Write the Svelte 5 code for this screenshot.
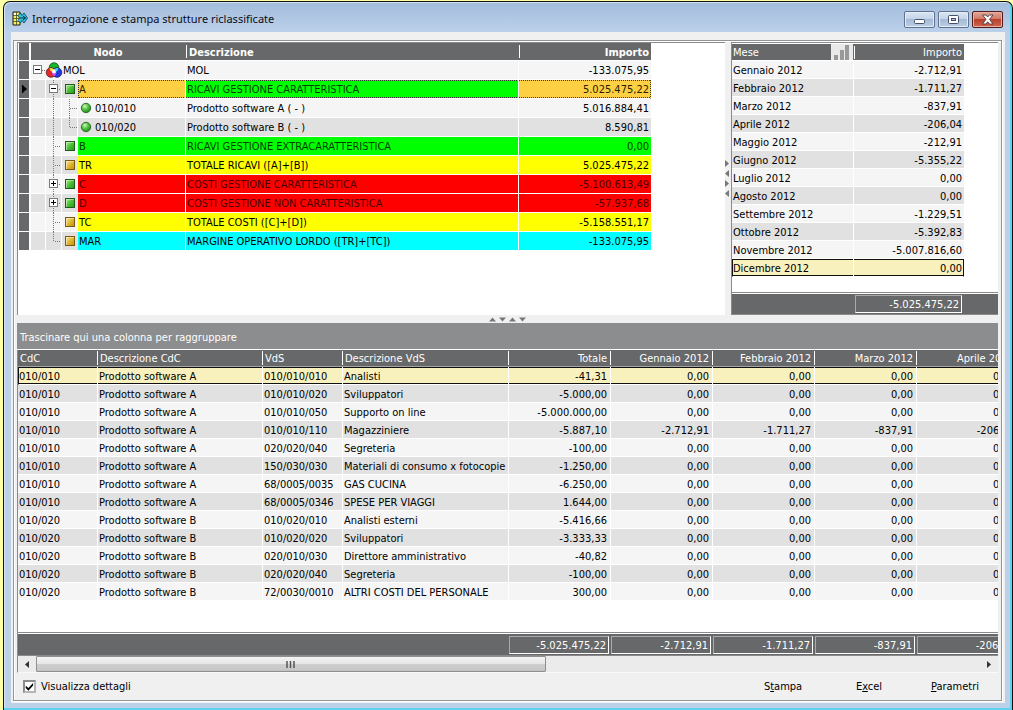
<script>
  const nodes = [
    { level: 0, code: 'MOL', text: 'MOL', amount: '-133.075,95', icon: 'rgb', toggle: '-', tone: '' },
    { level: 1, code: 'A', text: 'RICAVI GESTIONE CARATTERISTICA', amount: '5.025.475,22', icon: 'green', toggle: '-', tone: 'green', current: true },
    { level: 2, code: '010/010', text: 'Prodotto software A ( - )', amount: '5.016.884,41', icon: 'ball', tone: '' },
    { level: 2, code: '010/020', text: 'Prodotto software B ( - )', amount: '8.590,81', icon: 'ball', tone: '', last: true },
    { level: 1, code: 'B', text: 'RICAVI GESTIONE EXTRACARATTERISTICA', amount: '0,00', icon: 'green', tone: 'green' },
    { level: 1, code: 'TR', text: 'TOTALE RICAVI ([A]+[B])', amount: '5.025.475,22', icon: 'gold', tone: 'yellow' },
    { level: 1, code: 'C', text: 'COSTI GESTIONE CARATTERISTICA', amount: '-5.100.613,49', icon: 'green', toggle: '+', tone: 'red' },
    { level: 1, code: 'D', text: 'COSTI GESTIONE NON CARATTERISTICA', amount: '-57.937,68', icon: 'green', toggle: '+', tone: 'red' },
    { level: 1, code: 'TC', text: 'TOTALE COSTI ([C]+[D])', amount: '-5.158.551,17', icon: 'gold', tone: 'yellow' },
    { level: 1, code: 'MAR', text: 'MARGINE OPERATIVO LORDO ([TR]+[TC])', amount: '-133.075,95', icon: 'gold', tone: 'cyan', last: true },
  ];

  const months = [
    ['Gennaio 2012', '-2.712,91'],
    ['Febbraio 2012', '-1.711,27'],
    ['Marzo 2012', '-837,91'],
    ['Aprile 2012', '-206,04'],
    ['Maggio 2012', '-212,91'],
    ['Giugno 2012', '-5.355,22'],
    ['Luglio 2012', '0,00'],
    ['Agosto 2012', '0,00'],
    ['Settembre 2012', '-1.229,51'],
    ['Ottobre 2012', '-5.392,83'],
    ['Novembre 2012', '-5.007.816,60'],
    ['Dicembre 2012', '0,00'],
  ];

  const columns = ['CdC', 'Descrizione CdC', 'VdS', 'Descrizione VdS', 'Totale', 'Gennaio 2012', 'Febbraio 2012', 'Marzo 2012', 'Aprile 2012'];
  const zero = ['0,00', '0,00', '0,00', '0,00'];
  const A = ['010/010', 'Prodotto software A'];
  const B = ['010/020', 'Prodotto software B'];
  const details = [
    [...A, '010/010/010', 'Analisti', '-41,31', ...zero],
    [...A, '010/010/020', 'Sviluppatori', '-5.000,00', ...zero],
    [...A, '010/010/050', 'Supporto on line', '-5.000.000,00', ...zero],
    [...A, '010/010/110', 'Magazziniere', '-5.887,10', '-2.712,91', '-1.711,27', '-837,91', '-206,04'],
    [...A, '020/020/040', 'Segreteria', '-100,00', ...zero],
    [...A, '150/030/030', 'Materiali di consumo x fotocopie e', '-1.250,00', ...zero],
    [...A, '68/0005/0035', 'GAS CUCINA', '-6.250,00', ...zero],
    [...A, '68/0005/0346', 'SPESE PER VIAGGI', '1.644,00', ...zero],
    [...B, '010/020/010', 'Analisti esterni', '-5.416,66', ...zero],
    [...B, '010/020/020', 'Sviluppatori', '-3.333,33', ...zero],
    [...B, '020/010/030', 'Direttore amministrativo', '-40,82', ...zero],
    [...B, '020/020/040', 'Segreteria', '-100,00', ...zero],
    [...B, '72/0030/0010', 'ALTRI COSTI DEL PERSONALE', '300,00', ...zero],
  ];
  const totals = ['-5.025.475,22', '-2.712,91', '-1.711,27', '-837,91', '-206,04'];

  let currentMonth = $state(11);
  let currentDetail = $state(0);
  let showDetails = $state(true);
</script>

{#snippet toggleBox(x, sign)}
  <rect x={x + 0.5} y="4.5" width="8" height="8" fill="#fff" stroke="#7a7a7a" />
  <path d={sign === '+' ? `M${x + 2} 8.5h5M${x + 4.5} 6v5` : `M${x + 2} 8.5h5`} stroke="#000" fill="none" />
{/snippet}

<div class="desktop">
  <main class="window">
    <header class="titlebar">
      <svg width="16" height="16" viewBox="0 0 16 16" aria-hidden="true">
        <path d="M1 1h7v13H1z" fill="#f4ef5a" stroke="#1c1c10" />
        <path d="M1 4.5h7M1 7.5h7M1 10.5h7M4.5 1v13" stroke="#4a4a20" stroke-width=".8" />
        <path d="M2 2h2v2H2zM5 8h2v2H5z" fill="#fff" />
        <path d="M6 4.500l2.500-2.500 1.500 2.500 2-2.500 3.500 5-3.500 5-2-2.500-1.500 2.500L6 9.500l1.500-2.500z" fill="#35c4dc" stroke="#0b3a5c" stroke-width=".8" />
        <path d="M8 7h5.500M11 5l2.500 2-2.500 2" stroke="#06263c" fill="none" />
      </svg>
      <h1>Interrogazione e stampa strutture riclassificate</h1>
      <div class="caption-buttons">
        <button aria-label="Riduci a icona">
          <svg width="29" height="15" viewBox="0 0 29 15"><rect x="9.500" y="7.500" width="10" height="4" rx="1" fill="#fff" stroke="#44506a" /></svg>
        </button>
        <button aria-label="Ingrandisci">
          <svg width="29" height="15" viewBox="0 0 29 15"><rect x="9.500" y="3.500" width="10" height="8" rx="1" fill="#fff" stroke="#44506a" /><rect x="12.500" y="6.500" width="4" height="2" fill="#aebfd8" stroke="#44506a" /></svg>
        </button>
        <button class="close" aria-label="Chiudi">
          <svg width="29" height="15" viewBox="0 0 29 15"><path d="M9.500 3h3.500l1.700 2 1.700-2H20l-3.500 4.300L20 12h-3.600l-1.700-2.200L13 12H9.500L13 7.300z" fill="#fff" stroke="#4d3640" stroke-width=".9" /></svg>
        </button>
      </div>
    </header>

    <div class="client">
      <div class="panel">
        <div class="upper">
          <section class="tree-pane">
            <table class="tree">
              <colgroup><col class="c-mark" /><col class="c-node" /><col class="c-desc" /><col class="c-tree-amount" /></colgroup>
              <thead>
                <tr><th class="mark"></th><th class="center">Nodo</th><th class="sep">Descrizione</th><th class="sep num">Importo</th></tr>
              </thead>
              <tbody>
                {#each nodes as n, i}
                  <tr class={n.tone} class:odd={i % 2 === 1} class:current={n.current}>
                    <td class="mark">
                      {#if n.current}<svg width="10" height="18" viewBox="0 0 10 18"><path d="M3 4.500v9l5-4.500z" fill="#000" /></svg>{/if}
                    </td>
                    <td class="node">
                      <div class="node-line">
                        <svg class="guides" width={31 + n.level * 16} height="19" viewBox={`0 0 ${31 + n.level * 16} 19`} aria-hidden="true">
                          {#if n.level > 0}
                            <path d="M14.500 0v19M30.500 0v19" stroke="#fff" />
                            <path d={n.last && n.level === 1 ? 'M22.500 0v9' : 'M22.500 0v19'} stroke="#777" stroke-dasharray="1 1" />
                          {/if}
                          {#if n.level === 1}
                            <path d="M24 9.500h6" stroke="#777" stroke-dasharray="1 1" />
                          {/if}
                          {#if n.level === 2}
                            <path d="M46.500 0v19" stroke="#fff" />
                            <path d={n.last ? 'M38.500 0v9' : 'M38.500 0v19'} stroke="#777" stroke-dasharray="1 1" />
                            <path d="M39 9.500h7" stroke="#777" stroke-dasharray="1 1" />
                          {/if}
                          {#if n.toggle}{@render toggleBox(n.level === 0 ? 2 : 18, n.toggle)}{/if}
                          {#if n.icon === 'rgb'}
                            <path d="M11 9.500h4" stroke="#777" stroke-dasharray="1 1" />
                            <circle cx="23" cy="6.500" r="4.800" fill="#17b52c" stroke="#143d14" stroke-width=".7" />
                            <circle cx="20" cy="11.500" r="4.800" fill="#e3262c" stroke="#4a1010" stroke-width=".7" />
                            <circle cx="26" cy="11.500" r="4.800" fill="#2438dc" stroke="#10154a" stroke-width=".7" />
                            <path d="M18.500 7.200a4.800 4.800 0 0 1 4.200 1.200l-1 2.600a4.800 4.800 0 0 1-3.200-3.800z" fill="#f2e43c" />
                            <path d="M27.500 7.200a4.800 4.800 0 0 0-4.200 1.200l1 2.600a4.800 4.800 0 0 0 3.200-3.800z" fill="#35dce8" />
                            <path d="M23 8.500l1.800 2.700v2.500L23 15.200l-1.800-1.500v-2.500z" fill="#e24ae0" />
                            <path d="M23 7.500l2.300 3.700L23 12.500l-2.300-1.300z" fill="#fff" />
                          {:else if n.icon === 'green' || n.icon === 'gold'}
                            <rect x="34.500" y="4.500" width="9" height="9" fill={n.icon === 'green' ? 'url(#gGreen)' : 'url(#gGold)'} stroke={n.icon === 'green' ? '#1f5a1c' : '#7a5a10'} />
                            <path d="M35.500 13v-7.500h7.500" fill="none" stroke="#fff" stroke-opacity=".4" />
                          {:else}
                            <circle cx="55" cy="9" r="4.700" fill="url(#gBall)" stroke="#1f6a1c" stroke-width=".9" />
                          {/if}
                        </svg>
                        <span class="code">{n.code}</span>
                      </div>
                    </td>
                    <td class="fill">{n.text}</td>
                    <td class="fill num amount">{n.amount}</td>
                  </tr>
                {/each}
              </tbody>
            </table>
          </section>

          <div class="splitter-v">
            <svg width="5" height="38" viewBox="0 0 5 38" aria-hidden="true"><path d="M0 0l4 3.500-4 3.500zM4 10v7l-4-3.500zM0 20l4 3.500-4 3.500zM4 30v7l-4-3.500z" fill="#777" /></svg>
          </div>

          <section class="months-pane">
            <table class="months">
              <colgroup><col class="c-month" /><col class="c-month-amount" /></colgroup>
              <thead>
                <tr>
                  <th>
                    <div class="sorted"><span>Mese</span>
                      <svg width="22" height="16" viewBox="0 0 22 16" aria-hidden="true"><path d="M0 0h22v16H0z" fill="#e9e9e9" /><path d="M3 11h4v5H3zM9 6h4v10H9zM14 1h4v15h-4z" fill="#999" /></svg>
                    </div>
                  </th>
                  <th class="sep num">Importo</th>
                </tr>
              </thead>
              <tbody>
                {#each months as [name, amount], i}
                  <tr class:odd={i % 2 === 1} class:picked={i === currentMonth} onclick={() => (currentMonth = i)}>
                    <td>{name}</td><td class="num">{amount}</td>
                  </tr>
                {/each}
              </tbody>
            </table>
            <div class="months-total"><output>-5.025.475,22</output></div>
          </section>
        </div>

        <div class="splitter-h">
          <svg width="38" height="5" viewBox="0 0 38 5" aria-hidden="true"><path d="M0 4.500L3.500.500 7 4.500zM10 .500h7l-3.500 4zM20 4.500l3.500-4 3.500 4zM30 .500h7l-3.500 4z" fill="#777" /></svg>
        </div>

        <section class="details-pane">
          <div class="group-bar">Trascinare qui una colonna per raggruppare</div>
          <div class="details-view">
            <table class="details">
              <colgroup>
                <col class="c-code" /><col class="c-text" /><col class="c-code" /><col class="c-text-wide" />
                {#each totals as _}<col class="c-value" />{/each}
              </colgroup>
              <thead>
                <tr>{#each columns as c, i}<th class:num={i > 3}>{c}</th>{/each}</tr>
              </thead>
              <tbody>
                {#if showDetails}
                  {#each details as row, r}
                    <tr class:odd={r % 2 === 1} class:picked={r === currentDetail} onclick={() => (currentDetail = r)}>
                      {#each row as cell, i}<td class:num={i > 3}>{cell}</td>{/each}
                    </tr>
                  {/each}
                {/if}
              </tbody>
            </table>
            <div class="details-totals">
              {#each totals as t}<output>{t}</output>{/each}
            </div>
          </div>
          <div class="scrollbar">
            <button aria-label="Scorri a sinistra"><svg width="4" height="7" viewBox="0 0 4 7"><path d="M4 0v7L0 3.500z" fill="#333" /></svg></button>
            <div class="track">
              <div class="thumb"><svg width="9" height="7" viewBox="0 0 9 7"><path d="M1 0v7M4.500 0v7M8 0v7" stroke="#555" stroke-width="1.500" /></svg></div>
            </div>
            <button aria-label="Scorri a destra"><svg width="4" height="7" viewBox="0 0 4 7"><path d="M0 0v7l4-3.500z" fill="#333" /></svg></button>
          </div>
        </section>

        <footer class="commands">
          <label><input type="checkbox" bind:checked={showDetails} />Visualizza dettagli</label>
          <div class="actions">
            <button>S<u>t</u>ampa</button>
            <button>E<u>x</u>cel</button>
            <button><u>P</u>arametri</button>
          </div>
        </footer>
      </div>
    </div>
  </main>

  <svg class="defs" width="0" height="0" aria-hidden="true">
    <defs>
      <linearGradient id="gGreen" x1="0" y1="0" x2="1" y2="1"><stop offset="0" stop-color="#b5f09a" /><stop offset=".5" stop-color="#4cc035" /><stop offset="1" stop-color="#1f9a1c" /></linearGradient>
      <linearGradient id="gGold" x1="0" y1="0" x2="1" y2="1"><stop offset="0" stop-color="#fbeaa0" /><stop offset=".5" stop-color="#e0b830" /><stop offset="1" stop-color="#c08c10" /></linearGradient>
      <radialGradient id="gBall" cx=".38" cy=".32" r=".7"><stop offset="0" stop-color="#d8f8c8" /><stop offset=".45" stop-color="#5cc848" /><stop offset="1" stop-color="#1f8a1c" /></radialGradient>
    </defs>
  </svg>
</div>

<style>
  :global(body) { margin: 0; }
  .desktop, .desktop * { box-sizing: border-box; }
  .desktop {
    min-height: 100vh;
    display: flex;
    padding: 1px 0 0 3px;
    background: #ffffa6;
    font: 11px/16px "DejaVu Sans Condensed", "DejaVu Sans", sans-serif;
    color: #000;
  }
  .defs { position: absolute; }
  svg { display: block; flex: none; }
  button { font: inherit; color: inherit; padding: 0; }

  .window {
    flex: 1;
    min-width: 0;
    display: flex;
    flex-direction: column;
    border: 1px solid #111;
    border-bottom: 0;
    border-radius: 7px 7px 0 0;
    padding: 0 7px 7px;
    background: linear-gradient(#a3bddc, #bdd1ea 32px, #bcd0e8);
    box-shadow: inset -2px -2px 0 #5fd0ee, inset 1px 1px 0 #d5e4f4;
  }
  .titlebar {
    height: 30px;
    display: flex;
    align-items: center;
    gap: 4px;
    padding: 4px 2px 0 1px;
  }
  h1 { flex: 1; margin: 0; font: 11px/16px "Noto Sans", sans-serif; color: #0c0c18; }
  .caption-buttons { display: flex; gap: 3px; align-self: flex-start; padding-top: 5px; }
  .caption-buttons button {
    width: 31px;
    height: 17px;
    border: 1px solid #60718d;
    border-radius: 2px;
    background: linear-gradient(#dbe6f3, #c3d3e7 48%, #a5bad5 50%, #bccee4);
    box-shadow: inset 0 0 0 1px #e3edf8;
  }
  .caption-buttons .close {
    border-color: #511a1c;
    background: linear-gradient(#e0a596, #d07864 48%, #b8402c 50%, #d0654c);
    box-shadow: inset 0 0 0 1px #e6b0a4;
  }

  .client { flex: 1; display: flex; background: #f0f0f0; padding: 8px 3px 2px 2px; }
  .panel {
    flex: 1;
    min-width: 0;
    display: flex;
    flex-direction: column;
    border: 1px solid #949494;
    box-shadow: inset 1px 1px 0 #fff, 1px 1px 0 #fff;
    padding: 1px 3px 0;
  }

  .upper { display: grid; grid-template-columns: minmax(0, 1fr) 6px 267px; }
  .tree-pane { background: #fff; border: solid #8a8a8a; border-width: 1px 0 0 1px; padding-left: 1px; overflow: hidden; }
  .splitter-v { display: flex; align-items: center; }
  .splitter-h { height: 8px; display: flex; align-items: center; justify-content: center; }

  table { border-collapse: separate; border-spacing: 0; table-layout: fixed; }
  th, td {
    padding: 3px 2px 0 1px;
    line-height: 14px;
    overflow: hidden;
    white-space: nowrap;
    text-align: left;
    border: 0 solid #fff;
    border-bottom-width: 1px;
  }
  td { background: #f5f5f5; border-right-width: 1px; }
  .odd td { background: #e1e1e1; }
  th { background: #676869; color: #fff; font-weight: normal; }
  td:last-child { border-right-width: 0; }
  th.center { text-align: center; }
  .num { text-align: right; }

  .tree { width: 632px; }
  .c-mark { width: 12px; }
  .c-node { width: 155px; }
  .c-desc { width: 333px; }
  .c-tree-amount { width: 132px; }
  .tree th { height: 18px; font-weight: bold; }
  .tree td { height: 19px; padding-top: 2px; line-height: 16px; }
  .tree .mark { padding: 0; background: #676869; border-right: 2px solid #fff; }
  .tree .node { padding: 0; overflow: visible; }
  .sep { background: linear-gradient(#fff, #fff) 0 2px / 1px 13px no-repeat #676869; padding-left: 3px; }
  .node-line { display: flex; height: 18px; }
  .guides { overflow: visible; }
  .code { flex: 1; padding: 2px 0 0 1px; }
  .green .code, .green .fill { background-color: #00ff00; color: #003c00; }
  .yellow .code, .yellow .fill { background-color: #ffff00; }
  .red .code, .red .fill { background-color: #ff0000; color: #480000; }
  .cyan .code, .cyan .fill { background-color: #00ffff; }
  .current .code, .current .amount { background-color: #fdd044; color: #2a2000; }
  .current .code, .current .fill {
    background-image: repeating-linear-gradient(90deg, #333 0 1px, transparent 1px 2px), repeating-linear-gradient(90deg, #333 0 1px, transparent 1px 2px);
    background-size: 100% 1px;
    background-position: 0 0, 0 100%;
    background-repeat: no-repeat;
    background-origin: padding-box;
  }
  .current .code { border-left: 1px dotted #333; padding-left: 0; }
  .current .amount { border-right: 1px dotted #333; padding-right: 1px; }

  .months-pane {
    display: flex;
    flex-direction: column;
    background: #fff;
    border: solid #8a8a8a;
    border-width: 1px 0 1px 1px;
  }
  .months { width: 232px; }
  .c-month { width: 122px; }
  .c-month-amount { width: 110px; }
  .months th { height: 18px; border-top-width: 1px; padding-top: 0; }
  .months td, .details td { height: 18px; }
  .sorted { display: flex; justify-content: space-between; height: 16px; line-height: 17px; }
  .months .sep { padding-top: 2px; }
  .months th:first-child { padding-right: 1px; }
  .picked td, .picked.odd td {
    background: linear-gradient(#111, #111) 0 0 / 100% 1px no-repeat, linear-gradient(#111, #111) 0 100% / 100% 1px no-repeat, #f9f1bd;
  }
  .picked td:first-child { border-left: 1px solid #111; padding-left: 0; }
  .months .picked td:last-child { border-right: 1px solid #111; padding-right: 1px; }
  .months-total {
    margin-top: 15px;
    border-top: 1px solid #8a8a8a;
    padding: 2px 36px 1px 0;
    background: linear-gradient(#fff, #fff) 0 0 / 100% 1px no-repeat #676869;
    display: flex;
    justify-content: flex-end;
  }
  output { display: block; height: 18px; line-height: 17px; border: 1px solid #fff; border-top-color: #aaa; border-left-color: #aaa; color: #fff; text-align: right; padding-right: 2px; }
  .months-total output { width: 107px; }

  .details-pane { flex: 1; display: flex; flex-direction: column; }
  .group-bar { height: 27px; padding: 7px 3px 0; background: #8c8d8e; color: #fff; border-bottom: 1px solid #fff; }
  .details-view {
    flex: 1;
    display: flex;
    flex-direction: column;
    overflow: hidden;
    background: #fff;
    border-left: 1px solid #8a8a8a;
  }
  .details { width: 1000px; }
  .c-code { width: 80px; }
  .c-text { width: 165px; }
  .c-text-wide { width: 166px; }
  .c-value { width: 102px; }
  .c-value:last-child { width: 101px; }
  .details th {
    height: 17px;
    padding-top: 2px;
    border-bottom-color: #a5a5a5;
    padding-left: 2px;
    background: linear-gradient(#fff, #fff) 100% 1px / 1px 14px no-repeat #676869;
  }
  .details td:nth-child(4) { padding-right: 0; }
  .details .num { padding-right: 3px; }
  .details th.num { padding-right: 4px; }
  .details-totals {
    margin-top: auto;
    width: 1001px;
    display: grid;
    grid-template-columns: repeat(5, 100px);
    column-gap: 2px;
    padding: 3px 1px 1px 491px;
    border: solid #8a8a8a;
    border-width: 1px 0;
    background: linear-gradient(#fff, #fff) 0 0 / 100% 1px no-repeat #676869;
  }

  .scrollbar { height: 17px; display: flex; border-left: 1px solid #8a8a8a; background: #ebebeb; border-bottom: 1px solid #fafafa; }
  .scrollbar button { width: 18px; border: 0; background: transparent; display: grid; place-items: center; }
  .track { flex: 1; display: flex; }
  .thumb {
    width: 54%;
    border: 1px solid #8f8f8f;
    border-radius: 1px;
    background: linear-gradient(#f4f4f4, #e6e6e6 48%, #cfcfcf 52%, #c4c4c4);
    display: grid;
    place-items: center;
  }

  .commands { height: 27px; display: flex; align-items: center; justify-content: space-between; padding-left: 6px; }
  label { display: flex; align-items: center; gap: 5px; }
  input {
    appearance: none;
    width: 13px;
    height: 13px;
    margin: 0;
    border: 2px solid #8b8b8b;
    border-right-color: #b5b5b5;
    border-bottom-color: #b5b5b5;
    background: #fff;
    display: grid;
    place-items: center;
  }
  input:checked::before { content: ""; width: 9px; height: 9px; background: #000; clip-path: polygon(8% 42%, 38% 68%, 90% 12%, 90% 40%, 38% 96%, 8% 68%); }
  .actions { display: flex; }
  .actions button { width: 86px; height: 20px; border: 0; background: transparent; }
</style>
